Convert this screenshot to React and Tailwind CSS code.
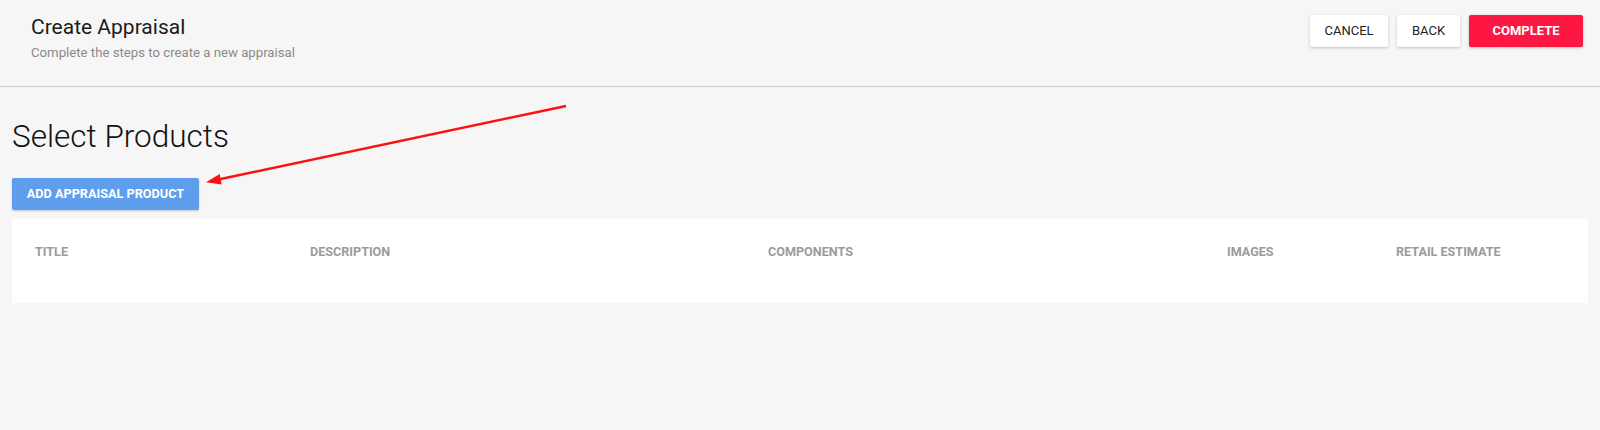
import React from 'react'

const columns = [
  { label: 'TITLE' },
  { label: 'DESCRIPTION' },
  { label: 'COMPONENTS' },
  { label: 'IMAGES' },
  { label: 'RETAIL ESTIMATE' }
]

// header bar with actions
const PageHeader = () => (
  <div className="flex justify-between h-[87px] border-b border-[#c9c9c9] pl-[31px] pr-[17px]">
    <div className="pt-[13px]">
      <h1 className="text-[21px] leading-[28px] font-normal text-[#1b1b1b]">Create Appraisal</h1>
      <p className="text-[13.2px] leading-[18px] mt-[3px] text-[#8a8a8a]">Complete the steps to create a new appraisal</p>
    </div>
    <div className="flex gap-[9px] pt-[15px]">
      <button className="h-[32px] w-[78px] bg-white rounded-[2px] shadow-[0_1px_3px_rgba(0,0,0,0.22)] text-[13px] font-normal text-[#222]">CANCEL</button>
      <button className="h-[32px] w-[63px] bg-white rounded-[2px] shadow-[0_1px_3px_rgba(0,0,0,0.22)] text-[13px] font-normal text-[#222]">BACK</button>
      <button className="h-[32px] w-[114px] bg-[#ff1744] rounded-[2px] shadow-[0_1px_3px_rgba(0,0,0,0.22)] text-[13px] font-bold text-white">COMPLETE</button>
    </div>
  </div>
)

const Arrow = () => (
  <svg className="absolute inset-0 pointer-events-none" width="1600" height="430">
    <line x1="566" y1="106" x2="216" y2="180" stroke="#ff1010" strokeWidth="2.5" />
    <polygon points="206,182.3 221.7,184.5 219.7,174" fill="#ff1010" />
  </svg>
)

export default function App() {
  return (
    <div className="relative min-h-[430px] bg-[#f6f6f6] font-['Roboto',sans-serif]">
      <PageHeader />

      <div className="px-[12px] pb-[20px]">
        <h2 className="mt-[30px] text-[31.5px] leading-[40px] font-light text-[#111]">Select Products</h2>

        <button className="mt-[21px] h-[32px] w-[187px] bg-[#5e9eec] rounded-[2px] shadow-[0_1px_2px_rgba(0,0,0,0.2)] text-[12.7px] font-bold text-white">
          ADD APPRAISAL PRODUCT
        </button>

        <div className="mt-[9px] bg-white h-[84px] pl-[23px]">
          <div className="grid grid-cols-[275px_458px_459px_169px_1fr] pt-[25px]">
            {columns.map((c) => (
              <div key={c.label} className="text-[12.6px] leading-[16px] font-bold text-[#9b9b9b]">{c.label}</div>
            ))}
          </div>
        </div>
      </div>

      <Arrow />
    </div>
  )
}
